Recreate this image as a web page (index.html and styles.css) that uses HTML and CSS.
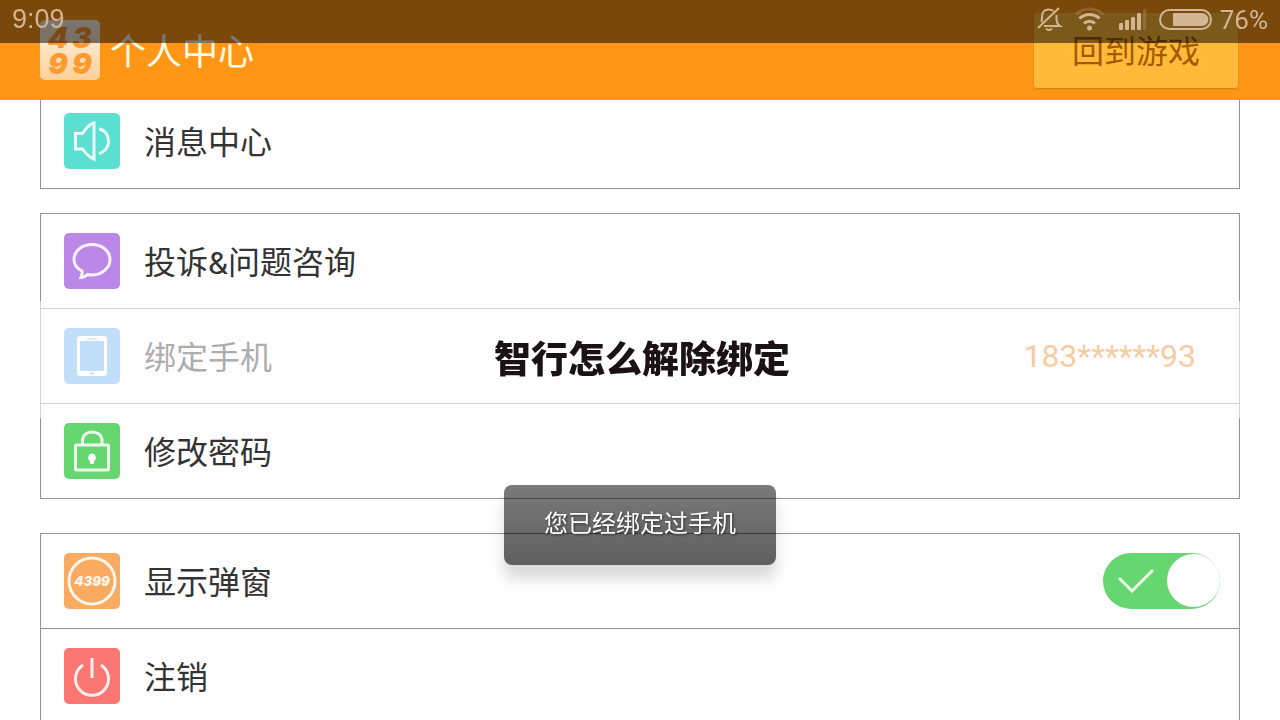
FILE: index.html
```html
<!DOCTYPE html>
<html lang="zh-CN">
  <head>
    <meta charset="UTF-8" />
    <meta name="viewport" content="width=device-width, initial-scale=1.0" />
    <title>个人中心</title>
    <link rel="stylesheet" href="styles.css">
  </head>
  <body>
    <div class="status-bar">
      <span class="time">9:09</span>
      <div class="status-icons">
        <svg width="26" height="26" viewBox="0 0 26 26" fill="none" stroke="currentColor" stroke-width="2">
          <path d="M1 21L22 1M7 19H23C20 17 19.500 15 19.500 12V8M4.500 15C5 13 5 12 5 9.500C5 5 8 2.500 11.500 2.500C13.500 2.500 15 3 16.500 4" />
          <path d="M9 21.500C10.500 23.500 13.500 23.500 15 21.500" />
        </svg>
        <svg width="30" height="26" viewBox="0 0 30 26" fill="none" stroke="currentColor" stroke-width="3">
          <path d="M1 7.500C8 0 21 0 28 7.500" opacity="0.25" />
          <path d="M4.500 11.500C10 6 19 6 24.500 11.500M9 16.500C12 13.500 17 13.500 20 16.500" />
          <circle cx="14.500" cy="21" r="2.500" fill="currentColor" stroke="none" />
        </svg>
        <svg width="30" height="26" viewBox="0 0 30 26" fill="currentColor">
          <rect x="2" y="16" width="4" height="7" rx="1" />
          <rect x="8" y="13" width="4" height="10" rx="1" />
          <rect x="14" y="10" width="4" height="13" rx="1" />
          <rect x="20" y="6" width="4" height="17" rx="1" />
          <rect x="26" y="2" width="3" height="21" rx="1" opacity="0.25" />
        </svg>
        <div class="battery">
          <svg width="53" height="26" viewBox="0 0 53 26">
            <rect x="1" y="3" width="51" height="19" rx="9.500" fill="none" stroke="currentColor" stroke-width="2" />
            <path d="M14 6H43A6.500 6.500 0 0 1 43 19H14Z" fill="currentColor" />
          </svg>
          <span>76%</span>
        </div>
      </div>
    </div>

    <header class="header">
      <div class="header-title">
        <svg class="logo" width="60" height="60" viewBox="0 0 60 60">
          <defs>
            <linearGradient id="logoBg" x1="0" y1="0" x2="0" y2="1">
              <stop offset="0" stop-color="#fff6ea" />
              <stop offset="1" stop-color="#ffcf98" />
            </linearGradient>
          </defs>
          <rect width="60" height="60" rx="5" fill="url(#logoBg)" />
          <text class="logo-text" x="18 42" y="28">43</text>
          <text class="logo-text" x="18 42" y="54">99</text>
        </svg>
        <h1>个人中心</h1>
      </div>
      <button class="back-btn">回到游戏</button>
    </header>

    <main class="container">
      <section class="group">
        <a class="row" href="#">
          <svg class="icon teal" viewBox="0 0 56 56">
            <path d="M30 10C26 11 22 15 18.500 20.500H11.500V36H18.500C22 41 26 44.500 30 46Z" />
            <path d="M35 16C41 17 44.500 22 44.500 28C44.500 34 41 39 35 40.500" />
          </svg>
          <span class="label">消息中心</span>
        </a>
      </section>

      <section class="group">
        <a class="row" href="#">
          <svg class="icon purple" viewBox="0 0 56 56">
            <path d="M18 38C13 35.500 10 31.500 10 26.500C10 18 18 11.500 28 11.500S46 18 46 26.500S38 42 28 42C26.500 42 25 42 23.500 41.500C21.500 43.500 19.500 44.500 17 44.500C18 42.500 18.500 40.500 18 38Z" />
          </svg>
          <span class="label">投诉&amp;问题咨询</span>
        </a>
        <button class="row disabled" disabled>
          <svg class="icon blue" viewBox="0 0 56 56">
            <path d="M16 8H40Q43 8 43 11V45Q43 48 40 48H16Q13 48 13 45V11Q13 8 16 8ZM16 13V43H40V13ZM23 10.500V11.500H33V10.500ZM26 44.500V46.500H30V44.500Z" fill="#fff" fill-rule="evenodd" stroke="none" />
          </svg>
          <span class="label">绑定手机</span>
          <span class="phone">183******93</span>
        </button>
        <a class="row" href="#">
          <svg class="icon green" viewBox="0 0 56 56">
            <rect x="11.500" y="22" width="33" height="25" rx="1" />
            <path d="M18.500 22V18C18.500 12 22.500 9 28 9S38 12 38 18V22" />
            <path d="M28 30.500A4 4 0 0 1 30.500 37.500L29.500 41H26.500L25.500 37.500A4 4 0 0 1 28 30.500Z" fill="#fff" stroke="none" />
          </svg>
          <span class="label">修改密码</span>
        </a>
      </section>

      <section class="group settings">
        <label class="row">
          <svg class="icon orange" viewBox="0 0 56 56">
            <circle cx="28" cy="28" r="23" />
            <text class="icon-text" x="28" y="33" text-anchor="middle">4399</text>
          </svg>
          <span class="label">显示弹窗</span>
          <span class="switch">
            <input type="checkbox" checked>
            <svg class="check" viewBox="0 0 36 24">
              <path d="M1 9L14 22L35 1" />
            </svg>
          </span>
        </label>
        <a class="row" href="#">
          <svg class="icon red" viewBox="0 0 56 56">
            <path d="M28 10V30M19 17A16.500 16.500 0 1 0 37 17" />
          </svg>
          <span class="label">注销</span>
        </a>
      </section>
    </main>

    <h2 class="caption">智行怎么解除绑定</h2>
    <div class="toast" role="status">您已经绑定过手机</div>
  </body>
</html>
```
FILE: styles.css
```css
* {
  box-sizing: border-box;
}
html {
  scrollbar-width: none;
}
body {
  margin: 0;
  background-color: #fefefe;
  color: #333;
  font-family: Roboto, "Noto Sans CJK SC", sans-serif;
  font-size: 32px;
}
h1,
h2 {
  margin: 0;
}

.status-bar {
  position: fixed;
  top: 0;
  left: 0;
  right: 0;
  z-index: 3;
  height: 43px;
  padding: 0 12px 4px;
  display: flex;
  justify-content: space-between;
  align-items: center;
  background-color: rgba(0, 0, 0, 0.52);
  color: #d3b592;
  font-size: 26px;
}
.time {
  font-family: "Liberation Sans", sans-serif;
  font-size: 27px;
}
.status-icons {
  display: flex;
  align-items: center;
  gap: 12px;
}
.battery {
  display: flex;
  align-items: center;
  gap: 8px;
}

.header {
  position: fixed;
  top: 0;
  left: 0;
  right: 0;
  z-index: 2;
  height: 100px;
  padding: 0 42px 0 40px;
  display: flex;
  justify-content: space-between;
  align-items: center;
  background-color: #ff9616;
}
.header-title {
  display: flex;
  align-items: center;
  gap: 10px;
}
.header h1 {
  padding-bottom: 2px;
  color: #fffbe6;
  font-size: 36px;
  font-weight: 400;
}
.logo-text {
  fill: #ff9a30;
  font-family: Inter, sans-serif;
  font-size: 29px;
  font-weight: 900;
  font-style: italic;
  text-anchor: middle;
}
.back-btn {
  width: 204px;
  height: 75px;
  padding: 0 0 2px;
  border: none;
  border-radius: 3px;
  background-color: #ffba3a;
  box-shadow: 0 1px 2px #c97a10;
  color: #a35a00;
  font-family: inherit;
  font-size: 32px;
  cursor: pointer;
}

.container {
  padding: 93px 40px 0;
}
.group {
  margin-bottom: 24px;
  border: 1px solid #929292;
  border-bottom: none;
}
.settings {
  margin-top: 34px;
}
.row {
  width: 100%;
  height: 95px;
  padding: 0 19px 0 23px;
  display: flex;
  align-items: center;
  gap: 24px;
  border: none;
  border-bottom: 1px solid #929292;
  background: none;
  color: #333;
  font-family: inherit;
  font-size: 32px;
  text-decoration: none;
  cursor: pointer;
}
.label {
  padding-bottom: 2px;
}
.row:has(+ .disabled) {
  border-bottom-color: #d2d2d2;
}
.disabled {
  position: relative;
  border-bottom-color: #d2d2d2;
  color: #adadad;
  cursor: default;
}
/* fades the side borders around the disabled row */
.disabled::before,
.disabled::after {
  content: "";
  position: absolute;
  top: -8px;
  bottom: -15px;
  width: 1px;
  background-color: rgba(255, 255, 255, 0.6);
}
.disabled::before {
  left: -1px;
}
.disabled::after {
  right: -1px;
}
.phone {
  margin-left: auto;
  padding-right: 24px;
  color: #f7cca2;
}

.icon {
  flex: none;
  width: 56px;
  height: 56px;
  border-radius: 5px;
  fill: none;
  stroke: #fff;
  stroke-opacity: 0.88;
  stroke-width: 3;
}
.icon-text {
  fill: #fff5e6;
  stroke: none;
  font-family: Inter, sans-serif;
  font-size: 13px;
  font-weight: 900;
  font-style: italic;
}
.teal {
  background-color: #5bdfd0;
}
.purple {
  background-color: #bb88e8;
}
.blue {
  background-color: #c1dff9;
}
.green {
  background-color: #66d671;
}
.orange {
  background-color: #f9ac61;
}
.red {
  background-color: #fb7774;
}

.switch {
  position: relative;
  margin-left: auto;
  display: flex;
}
.switch input {
  appearance: none;
  width: 117px;
  height: 56px;
  margin: 0;
  padding: 1px 0;
  display: flex;
  border-radius: 28px;
  background-color: #ccc;
  cursor: pointer;
}
.switch input::before {
  content: "";
  width: 53px;
  height: 53px;
  border-radius: 50%;
  background-color: #fff;
}
.switch input:checked {
  justify-content: flex-end;
  background-color: #66d671;
}
.check {
  position: absolute;
  top: 16px;
  left: 15px;
  width: 36px;
  height: 24px;
  fill: none;
  stroke: #effbe9;
  stroke-width: 3;
  pointer-events: none;
}

.caption {
  position: fixed;
  top: 50%;
  left: 0;
  right: 0;
  z-index: 4;
  transform: translateY(-50%);
  padding: 0 0 6px 4px;
  color: #1a1214;
  font-size: 37px;
  font-weight: 900;
  text-align: center;
  pointer-events: none;
}
.toast {
  position: fixed;
  bottom: 155px;
  left: 50%;
  z-index: 4;
  transform: translateX(-50%);
  padding: 23px 40px 25px;
  border-radius: 8px;
  background: linear-gradient(rgba(0, 0, 0, 0.52), rgba(0, 0, 0, 0.63));
  box-shadow: 0 14px 14px rgba(0, 0, 0, 0.14);
  color: #fff;
  font-size: 24px;
  line-height: 32px;
  text-shadow: 1px 1px 3px rgba(0, 0, 0, 0.6);
  white-space: nowrap;
}
```
